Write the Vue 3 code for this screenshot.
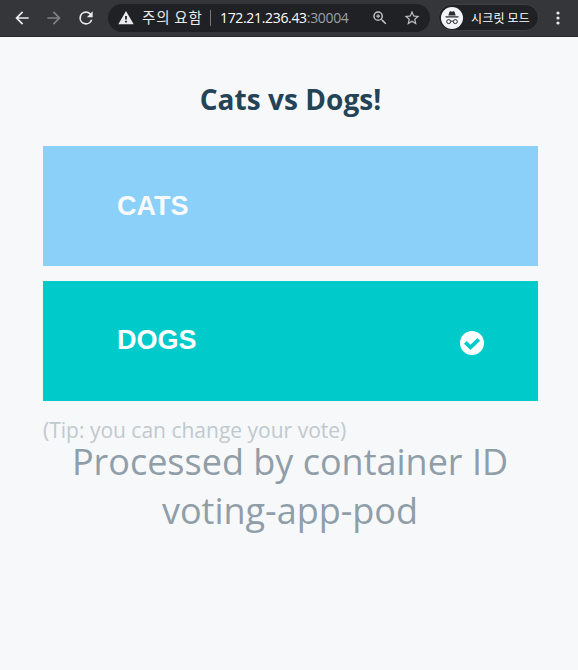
<script setup>
import { ref } from 'vue'

const vote = ref('b')
const options = [
  { id: 'a', label: 'Cats' },
  { id: 'b', label: 'Dogs' },
]
</script>

<template>
  <div class="window">
    <header class="toolbar">
      <svg class="icon nav" viewBox="0 0 24 24"><path d="M20 11H7.83l5.59-5.59L12 4l-8 8 8 8 1.41-1.41L7.83 13H20z" /></svg>
      <svg class="icon nav off" viewBox="0 0 24 24"><path d="M12 4l-1.41 1.41L16.17 11H4v2h12.17l-5.58 5.59L12 20l8-8z" /></svg>
      <svg class="icon nav" viewBox="0 0 24 24"><path d="M17.65 6.35A7.96 7.96 0 0 0 12 4a8 8 0 1 0 7.73 10h-2.08A6 6 0 1 1 12 6c1.66 0 3.14.69 4.22 1.78L13 11h7V4z" /></svg>
      <div class="omnibox">
        <svg class="icon warn" viewBox="0 0 16 16"><path fill-rule="evenodd" d="M8 1 .3 14.3h15.4zM7.1 5.9h1.8v3.6H7.1zm0 4.9h1.8v1.8H7.1z" /></svg>
        <span class="security">주의 요함</span>
        <span class="divider"></span>
        <span class="url">172.21.236.43<span class="port">:30004</span></span>
        <svg class="icon zoom" viewBox="0 0 24 24"><path d="M15.5 14h-.79l-.28-.27A6.47 6.47 0 0 0 16 9.5 6.5 6.5 0 1 0 9.5 16c1.61 0 3.09-.59 4.23-1.57l.27.28v.79l5 4.99L20.49 19zm-6 0a4.5 4.5 0 1 1 0-9 4.5 4.5 0 0 1 0 9zM12 10.25h-1.75V12h-1.5v-1.75H7v-1.5h1.75V7h1.5v1.75H12z" /></svg>
        <svg class="icon star" viewBox="0 0 24 24"><path d="m22 9.24-7.19-.62L12 2 9.19 8.63 2 9.24l5.46 4.73L5.82 21 12 17.27 18.18 21l-1.63-7.03zM12 15.4l-3.76 2.27 1-4.28-3.32-2.88 4.38-.38L12 6.1l1.71 4.04 4.38.38-3.32 2.88 1 4.28z" /></svg>
      </div>
      <div class="chip">
        <svg class="spy" viewBox="0 0 22 22">
          <circle cx="11" cy="11" r="11" fill="#f1f3f4" />
          <path d="M7.3 8.5 8.5 4.8q.3-.8 1.1-.5L11 4.7l1.4-.4q.8-.3 1.1.5l1.2 3.7zM4.5 9.3h13v1.2h-13z" fill="#292a2d" />
          <g fill="none" stroke="#292a2d"><circle cx="7.7" cy="14.6" r="2" /><circle cx="14.3" cy="14.6" r="2" /><path d="M9.7 14.4q1.3-.8 2.6 0" /></g>
        </svg>
        <span>시크릿 모드</span>
      </div>
      <svg class="icon more" viewBox="0 0 4 14"><circle cx="2" cy="2" r="1.6" /><circle cx="2" cy="7" r="1.6" /><circle cx="2" cy="12" r="1.6" /></svg>
    </header>

    <main class="content">
      <h1>Cats vs Dogs!</h1>
      <div class="choices">
        <button v-for="o in options" :key="o.id" :class="['choice', o.id]" @click="vote = o.id">
          <span>{{ o.label }}</span>
          <svg v-if="vote === o.id" class="check" viewBox="0 0 24 24">
            <circle cx="12" cy="12" r="12" fill="#fff" />
            <path d="m5.3 11.3 5.2 5 8.300-8" fill="none" stroke="#00cbca" stroke-width="3.800" />
          </svg>
        </button>
      </div>
      <p class="tip">(Tip: you can change your vote)</p>
      <p class="host">Processed by container ID<br />voting-app-pod</p>
    </main>
  </div>
</template>

<style>
body {
  background: #f7f8f9;
}
</style>

<style scoped>
.window {
  min-height: 670px;
  background: #f7f8f9;
  font-family: "Open Sans", "Noto Sans CJK KR", sans-serif;
}
.toolbar {
  display: flex;
  align-items: center;
  box-sizing: border-box;
  height: 37px;
  padding: 0 0 1px 12px;
  background: #35363a;
  border-bottom: 1px solid #292a2d;
}
.icon {
  flex: none;
  fill: #e8eaed;
}
.nav {
  width: 20px;
  height: 20px;
  margin-right: 12px;
}
.off {
  fill: #7f8185;
}
.omnibox {
  display: flex;
  align-items: center;
  box-sizing: border-box;
  width: 322px;
  height: 28px;
  padding-left: 10px;
  border-radius: 14px;
  background: #202124;
  color: #e8eaed;
  font-size: 14px;
  white-space: nowrap;
}
.warn {
  width: 16px;
  height: 16px;
}
.security {
  width: 61px;
  margin: -2px 0 0 8px;
  font-family: "Noto Sans CJK KR", sans-serif;
  font-size: 14.5px;
  letter-spacing: 0.8px;
}
.divider {
  width: 1px;
  height: 16px;
  margin: 0 9px 0 7px;
  background: #74767a;
}
.url {
  width: 151px;
  color: #fff;
  font-size: 14px;
  letter-spacing: -0.33px;
}
.port {
  color: #9aa0a6;
}
.zoom,
.star {
  width: 18px;
  height: 18px;
  fill: #bdc1c6;
}
.star {
  margin-left: 14px;
}
.chip {
  display: flex;
  align-items: center;
  box-sizing: border-box;
  width: 101px;
  height: 27px;
  margin-left: 8px;
  padding-left: 2px;
  border: 1px solid #3d3f42;
  border-radius: 14px;
  background: #202124;
  color: #fff;
  font: 400 12px "Noto Sans CJK KR", sans-serif;
  letter-spacing: 0.2px;
  white-space: nowrap;
}
.chip span {
  margin-top: -1px;
}
.spy {
  flex: none;
  width: 22px;
  height: 22px;
  margin-right: 8px;
}
.more {
  width: 4px;
  height: 14px;
  margin-left: 17px;
}
.content {
  padding: 43px 40px 0 43px;
}
h1 {
  margin: 0;
  color: #254356;
  font-size: 28px;
  font-weight: 700;
  line-height: 38px;
  letter-spacing: 0.05px;
  text-align: center;
}
.choices {
  display: grid;
  gap: 15px;
  margin-top: 28px;
}
.choice {
  display: flex;
  align-items: center;
  justify-content: space-between;
  height: 120px;
  padding: 0 54px 2px 74px;
  border: 0;
  color: #fff;
  font: 700 27px "Liberation Sans", Arial, sans-serif;
  text-transform: uppercase;
}
.a {
  padding-bottom: 0;
  background: #8ad0f9;
  color: #f9fafb;
}
.b {
  background: #00cbca;
}
.check {
  width: 24px;
  height: 24px;
  margin-top: 6px;
}
.tip {
  margin: 18px 0 0;
  color: #c0c9ce;
  font-size: 21px;
  line-height: 23px;
}
.host {
  margin: -5px 1px 0 0;
  color: #8f9ea8;
  font-size: 36px;
  line-height: 49px;
  text-align: center;
  white-space: nowrap;
}
</style>
